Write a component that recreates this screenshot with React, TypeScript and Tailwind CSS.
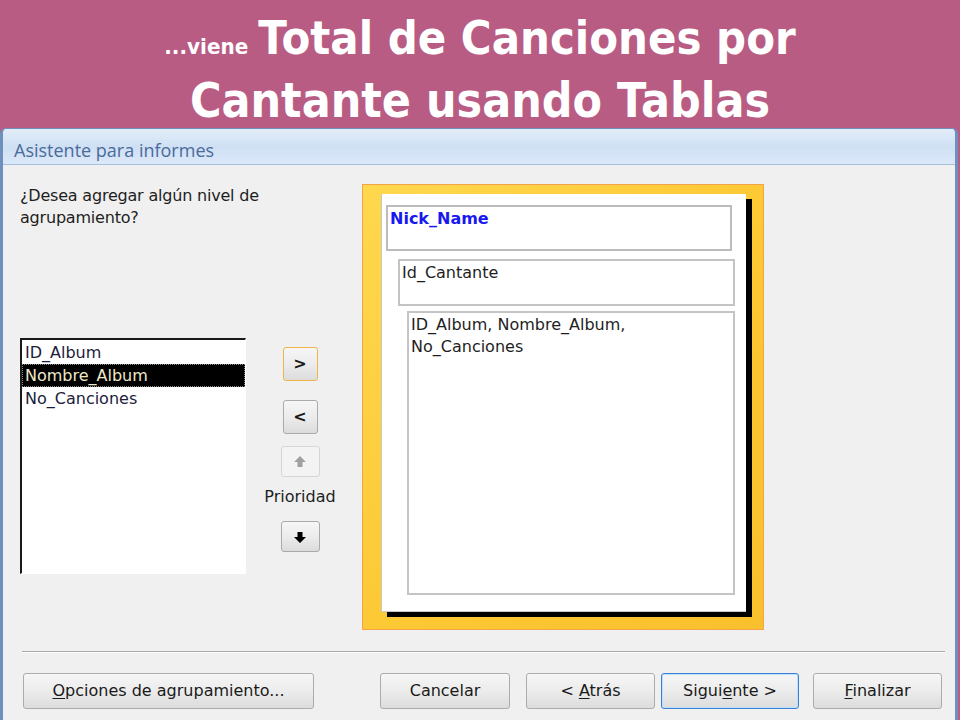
import React from "react";

const ui = { fontFamily: '"DejaVu Sans", "Liberation Sans", sans-serif' };

function Btn({ children, className = "" }: { children: React.ReactNode; className?: string }) {
  return (
    <div
      className={
        "flex items-center justify-center rounded-[3px] border bg-gradient-to-b from-[#f6f6f6] via-[#ececec] to-[#dcdcdc] text-[16px] text-[#1a1a1a] " +
        className
      }
    >
      {children}
    </div>
  );
}

function Arrow({ up, color }: { up: boolean; color: string }) {
  return (
    <svg width="14" height="14" viewBox="0 0 14 14">
      <polygon
        points={up ? "7,1 13,7 9.5,7 9.5,12 4.5,12 4.5,7 1,7" : "7,13 13,7 9.5,7 9.5,2 4.5,2 4.5,7 1,7"}
        fill={color}
      />
    </svg>
  );
}

export default function App() {
  return (
    <div className="flex h-[720px] w-[960px] flex-col overflow-hidden bg-[#b95c84]">
      {/* Header */}
      <div
        className="flex h-[128px] flex-col items-center pt-[11px] text-white"
        style={{ fontFamily: '"DejaVu Sans", sans-serif' }}
      >
        <div className="flex scale-y-110 items-baseline font-bold leading-[55px]">
          <span className="mr-[10px] text-[20px]">...viene</span>
          <span className="text-[42px]">Total de Canciones por</span>
        </div>
        <div className="scale-y-110 text-[43px] font-bold leading-[55px]">Cantante usando Tablas</div>
      </div>

      {/* Dialog */}
      <div
        className="mr-[2px] flex flex-1 flex-col overflow-hidden rounded-t-[6px] border-x-[3px] border-t border-[#6f8fbf] bg-[#f0f0f0]"
        style={ui}
      >
        <div className="flex h-[36px] items-center border-b border-[#a7c0de] bg-gradient-to-b from-[#e3edf9] via-[#cfe0f4] to-[#dbe8f8] pl-[11px] pt-[8px] text-[18px] text-[#4a6b9c]">
          <span style={{ fontFamily: '"Open Sans", sans-serif' }}>Asistente para informes</span>
        </div>

        <div className="flex h-[486px]">
          {/* Left column */}
          <div className="ml-[17px] flex w-[226px] flex-col">
            <div className="mt-[20px] whitespace-nowrap text-[16px] leading-[22px] tracking-[-0.2px] text-[#1e1e1e]">
              ¿Desea agregar algún nivel de
              <br />
              agrupamiento?
            </div>
            <div className="mt-[109px] h-[236px] border-b border-l-2 border-r border-t-2 border-b-white border-l-[#1a1a1a] border-r-white border-t-[#1a1a1a] bg-white pt-[1px] text-[16px] leading-[23px] text-[#1c1c3c]">
              <div className="pl-[3px]">ID_Album</div>
              <div className="border border-dotted border-[#888] bg-black pl-[2px] leading-[21px] text-[#f0e8c8]">Nombre_Album</div>
              <div className="pl-[3px]">No_Canciones</div>
            </div>
          </div>

          {/* Button column */}
          <div className="ml-[34px] mt-[182px] flex w-[40px] flex-col items-center">
            <Btn className="h-[34px] w-[35px] border-[#f0b449] font-bold">&gt;</Btn>
            <Btn className="mt-[19px] h-[34px] w-[35px] border-[#aaaaaa] font-bold">&lt;</Btn>
            <div className="mt-[12px] flex h-[31px] w-[39px] items-center justify-center rounded-[3px] border border-[#d6d6d6] bg-[#f3f3f3]">
              <Arrow up color="#a0a0a0" />
            </div>
            <div className="mt-[8px] whitespace-nowrap text-[16px] leading-[24px] text-[#1e1e1e]">Prioridad</div>
            <Btn className="mt-[12px] h-[31px] w-[39px] border-[#aaaaaa]">
              <Arrow up={false} color="#000" />
            </Btn>
          </div>

          {/* Preview */}
          <div className="ml-[42px] mt-[19px] h-[446px] w-[402px] border border-[#f4a24c] bg-gradient-to-br from-[#ffd84e] via-[#fdc935] to-[#f8c02c] pl-[18px] pt-[9px]">
            <div className="flex h-[418px] w-[365px] flex-col border-b border-l border-[#c8c8c8] bg-white shadow-[6px_5px_0_0_#000]">
              <div className="ml-[4px] mt-[11px] h-[46px] w-[346px] border-2 border-[#bcbcbc] pl-[2px] pt-[1px] text-[16px] font-bold leading-[22px] text-[#1818f0]">
                Nick_Name
              </div>
              <div className="ml-[16px] mt-[8px] h-[47px] w-[337px] border-2 border-[#c4c4c4] pl-[2px] pt-[1px] text-[16px] leading-[22px] text-[#1e1e1e]">
                Id_Cantante
              </div>
              <div className="ml-[25px] mt-[5px] h-[284px] w-[328px] border-2 border-[#c4c4c4] pl-[2px] pt-[1px] text-[16px] leading-[22px] text-[#1e1e1e]">
                ID_Album, Nombre_Album,
                <br />
                No_Canciones
              </div>
            </div>
          </div>
        </div>

        {/* Separator */}
        <div className="ml-[19px] mr-[10px] h-[2px] border-b border-t border-b-white border-t-[#a8a8a8]" />

        {/* Bottom buttons */}
        <div className="mt-[20px] flex text-[16px]">
          <Btn className="ml-[20px] h-[36px] w-[291px] border-[#acacac]">
            <span>
              <span className="underline underline-offset-2">O</span>pciones de agrupamiento...
            </span>
          </Btn>
          <Btn className="ml-[66px] h-[36px] w-[130px] border-[#acacac]">Cancelar</Btn>
          <Btn className="ml-[16px] h-[36px] w-[129px] border-[#acacac]">
            <span>
              &lt; <span className="underline underline-offset-2">A</span>trás
            </span>
          </Btn>
          <Btn className="ml-[6px] h-[36px] w-[138px] border-[#3c7fd6] shadow-[inset_0_0_0_1px_#bfe0fb]">
            <span>
              Sigui<span className="underline underline-offset-2">e</span>nte &gt;
            </span>
          </Btn>
          <Btn className="ml-[14px] h-[36px] w-[129px] border-[#acacac]">
            <span>
              <span className="underline underline-offset-2">F</span>inalizar
            </span>
          </Btn>
        </div>
      </div>
    </div>
  );
}
